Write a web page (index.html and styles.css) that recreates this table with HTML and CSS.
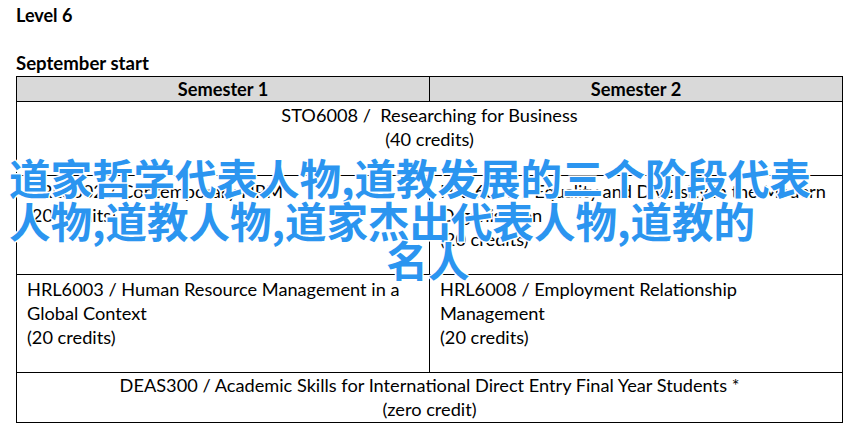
FILE: index.html
```html
<!DOCTYPE html>
<html lang="en">
<head>
<meta charset="utf-8">
<title>Level 6</title>
<link rel="stylesheet" href="styles.css">
</head>
<body>
<div class="page">
  <h1 class="level">Level 6</h1>
  <h2 class="start">September start</h2>
  <table class="plan">
    <tr class="head">
      <th>Semester 1</th>
      <th>Semester 2</th>
    </tr>
    <tr class="r1">
      <td colspan="2" class="center">STO6008 /&nbsp; Researching for Business<br>(40 credits)</td>
    </tr>
    <tr class="r2">
      <td>HRL6002 / Contemporary HRM<br>(20 credits)</td>
      <td>HRL6007 / Equality and Diversity in the Modern<br>Organisation<br>(20 credits)</td>
    </tr>
    <tr class="r3">
      <td>HRL6003 / Human Resource Management in a<br>Global Context<br>(20 credits)</td>
      <td>HRL6008 / Employment Relationship<br>Management<br>(20 credits)</td>
    </tr>
    <tr class="r4">
      <td colspan="2" class="center">DEAS300 / Academic Skills for International Direct Entry Final Year Students *<br>(zero credit)</td>
    </tr>
  </table>
</div>
<div class="overlay">
  <div class="ol-line">道家哲学代表人物,道教发展的三个阶段代表</div>
  <div class="ol-line">人物,道教人物,道家杰出代表人物,道教的</div>
  <div class="ol-line ol-center">名人</div>
</div>
</body>
</html>
```
FILE: styles.css
```css
html, body {
  margin: 0;
  padding: 0;
  background: #ffffff;
}
body {
  width: 856px;
  height: 434px;
  overflow: hidden;
  position: relative;
  font-family: Lato, "Liberation Sans", sans-serif;
  color: #000;
}
.page {
  padding: 3px 14px 0 16px;
}
.level {
  margin: 0;
  font-size: 18px;
  line-height: 24px;
  font-weight: 700;
}
.start {
  margin: 24px 0 0 0;
  font-size: 18.6px;
  line-height: 24px;
  font-weight: 700;
}
.plan {
  margin-top: 1px;
  width: 827px;
  border-collapse: collapse;
  table-layout: fixed;
  font-size: 18.2px;
  line-height: 24px;
}
.plan th, .plan td {
  border: 1px solid #000;
  padding: 0 10px;
  vertical-align: top;
  text-align: left;
  white-space: nowrap;
}
.plan th {
  background: #d9d9d9;
  text-align: center;
  font-weight: 700;
  vertical-align: middle;
  height: 24px;
  padding: 0;
}
.plan .center {
  text-align: center;
}
.r1 td { height: 72px; padding-top: 1px; }
.r2 td { height: 95px; padding-top: 3px; }
.r3 td { height: 95px; padding-top: 2px; }
.r4 td { height: 49px; padding-top: 0; }

.overlay {
  position: absolute;
  left: 0;
  top: 156px;
  width: 856px;
  font-family: "Noto Sans CJK SC", sans-serif;
  font-weight: 700;
  font-size: 41.5px;
  line-height: 43px;
  color: #2b95f0;
  -webkit-text-stroke: 3px #ffffff;
  paint-order: stroke fill;
}
.ol-line {
  padding-left: 9px;
  white-space: nowrap;
}
.ol-center {
  padding-left: 0;
  text-align: center;
  margin-top: -4px;
}
```
